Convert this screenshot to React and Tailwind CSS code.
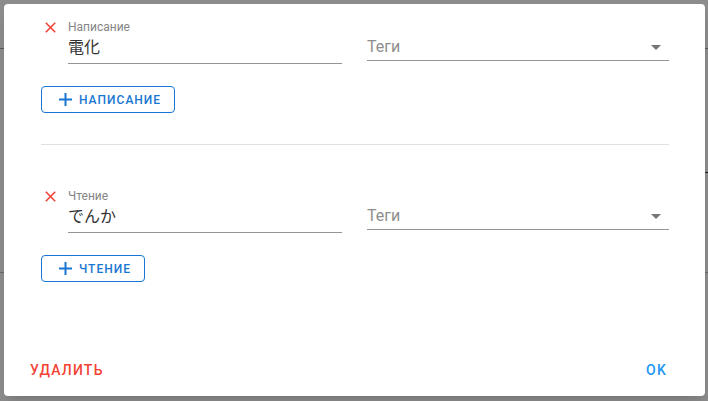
import { useState } from 'react';

const font = { fontFamily: 'Roboto, "Noto Sans CJK JP", sans-serif' };

function CloseIcon() {
  return (
    <svg width="11" height="11" viewBox="0 0 11 11" className="mt-[2px] ml-[4px] shrink-0">
      <path d="M0.8 0.8L10.2 10.2M10.2 0.8L0.8 10.2" stroke="#f44336" strokeWidth="1.6" />
    </svg>
  );
}

function PlusIcon() {
  return (
    <svg width="13" height="13" viewBox="0 0 13 13" className="shrink-0">
      <path d="M6.5 0V13M0 6.5H13" stroke="#1976d2" strokeWidth="2" />
    </svg>
  );
}

function TagSelect() {
  return (
    <div className="ml-[25px] mt-[17px] w-[302px] flex items-center justify-between pb-[3px] border-b border-[#949494]">
      <span className="text-[16px] leading-[20px] text-[#8e8e8e]">Теги</span>
      <svg width="10" height="5" viewBox="0 0 10 5" className="mr-[8px]">
        <path d="M0 0L5 5L10 0Z" fill="#757575" />
      </svg>
    </div>
  );
}

function Section({ label, value, button }) {
  return (
    <div className="flex flex-col items-start">
      <div className="flex items-start">
        <div className="w-[27px] shrink-0">
          <CloseIcon />
        </div>
        <div className="w-[274px] flex flex-col">
          <span className="text-[12px] leading-[14px] text-[#858585]">{label}</span>
          <span className="mt-[4px] pb-[5px] text-[16px] leading-[20px] text-[#333] border-b border-[#949494]">
            {value}
          </span>
        </div>
        <TagSelect />
      </div>
      <button className="mt-[22px] h-[27px] flex items-center gap-[7px] pl-[17px] pr-[13px] border border-[#1976d2] rounded-[4px] text-[#1976d2] text-[12px] font-medium tracking-[1px] uppercase">
        <PlusIcon />
        {button}
      </button>
    </div>
  );
}

export default function App() {
  const [open] = useState(true);

  return (
    <div className="relative w-[708px] h-[401px] bg-[#8c8c8c] overflow-hidden" style={font}>
      {/* фон под диалогом */}
      <div className="absolute left-0 right-0 top-[48px] h-px bg-[#5a5a5a]" />
      <div className="absolute right-0 w-[10px] top-[172px] h-px bg-[#222]" />
      <div className="absolute left-0 right-0 top-[272px] h-px bg-[#6a6a6a]" />

      {open && (
        <div className="absolute left-[4px] top-[4px] w-[701px] h-[392px] bg-white rounded-[4px] shadow-lg flex flex-col">
          <div className="pl-[37px] pr-[36px] pt-[16px] flex flex-col">
            <Section label="Написание" value="電化" button="Написание" />
            <div className="mt-[31px] h-px bg-[#e0e0e0]" />
            <div className="mt-[44px]">
              <Section label="Чтение" value="でんか" button="Чтение" />
            </div>
          </div>
          <div className="mt-auto flex justify-between pl-[26px] pr-[38px] pb-[18px]">
            <span className="text-[14px] leading-[16px] font-medium tracking-[1.2px] text-[#f44336]">УДАЛИТЬ</span>
            <span className="text-[14px] leading-[16px] font-medium tracking-[1.2px] text-[#2196f3]">OK</span>
          </div>
        </div>
      )}
    </div>
  );
}
